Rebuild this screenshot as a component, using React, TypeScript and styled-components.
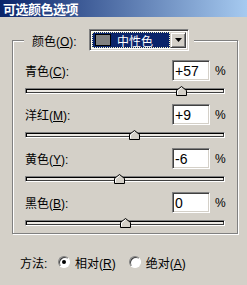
import styled, { createGlobalStyle } from 'styled-components';

const GlobalStyle = createGlobalStyle`
  html, body {
    margin: 0;
    padding: 0;
    background: #d4d0c8;
  }
  body {
    font-family: 'Liberation Sans', 'Noto Sans CJK SC', sans-serif;
    font-size: 12px;
    color: #000;
  }
`;

type TChannel = {
  name: string;
  key: string;
  value: number;
};

const channels: TChannel[] = [
  { name: '青色', key: 'C', value: 57 },
  { name: '洋红', key: 'M', value: 9 },
  { name: '黄色', key: 'Y', value: -6 },
  { name: '黑色', key: 'B', value: 0 },
];

const formatValue = (v: number) => (v > 0 ? `+${v}` : `${v}`);

const Thumb = ({ value }: { value: number }) => (
  <ThumbWrap style={{ left: `${(value + 100) / 2}%` }}>
    <svg width='11' height='10' viewBox='0 0 11 10'>
      <path d='M0.5 9.5 V4.5 L5.5 0.5 L10.5 4.5 V9.5 Z' fill='#d4d0c8' stroke='#000' />
      <path d='M1.5 8.5 V5 L5.5 1.8' fill='none' stroke='#fff' />
    </svg>
  </ThumbWrap>
);

export default function App() {
  return (
    <Dialog>
      <GlobalStyle />
      <TitleBar>可选颜色选项</TitleBar>
      <Group>
        <Legend>
          <LegendLabel>
            颜色(<u>O</u>):
          </LegendLabel>
          <Select>
            <SelectField>
              <Swatch />
              <SelectText>中性色</SelectText>
            </SelectField>
            <ArrowButton>
              <svg width='7' height='4' viewBox='0 0 7 4'>
                <path d='M0 0 H7 L3.5 4 Z' fill='#000' />
              </svg>
            </ArrowButton>
          </Select>
        </Legend>
        {channels.map((c) => (
          <Channel key={c.key}>
            <HeaderRow>
              <Label>
                {c.name}(<u>{c.key}</u>):
              </Label>
              <ValueBox>{formatValue(c.value)}</ValueBox>
              <Percent>%</Percent>
            </HeaderRow>
            <Track>
              <Thumb value={c.value} />
            </Track>
          </Channel>
        ))}
      </Group>
      <MethodRow>
        <MethodLabel>方法:</MethodLabel>
        <RadioItem>
          <Radio checked />
          <RadioText>
            相对(<u>R</u>)
          </RadioText>
        </RadioItem>
        <RadioItem>
          <Radio />
          <RadioText>
            绝对(<u>A</u>)
          </RadioText>
        </RadioItem>
      </MethodRow>
    </Dialog>
  );
}

const Dialog = styled.div`
  width: 247px;
  height: 285px;
  display: flex;
  flex-direction: column;
  background: #d4d0c8;
  overflow: hidden;
`;

const TitleBar = styled.div`
  height: 17px;
  padding-left: 3px;
  display: flex;
  align-items: center;
  background: linear-gradient(to right, #0a246a, #a6caf0);
  color: #fff;
  font-family: 'Noto Sans CJK SC', sans-serif;
  font-weight: bold;
  font-size: 13px;
  letter-spacing: -0.5px;
`;

const Group = styled.fieldset`
  margin: 12px 0 0 12px;
  width: 226px;
  box-sizing: border-box;
  min-inline-size: 0;
  padding: 9px 12px 7px 12px;
  border: 1px solid #808080;
  box-shadow: inset 1px 1px 0 #fff, 1px 1px 0 #fff;
`;

const Legend = styled.legend`
  display: flex;
  align-items: center;
  padding: 0 5px 0 8px;
  margin-left: -1px;
  background: #d4d0c8;
`;

const LegendLabel = styled.span`
  width: 57px;
`;

const Select = styled.div`
  display: flex;
  width: 100px;
  height: 22px;
  box-sizing: border-box;
  border: 1px solid;
  border-color: #808080 #fff #fff #808080;
  box-shadow: inset 1px 1px 0 #404040, inset -1px -1px 0 #d4d0c8;
  background: #fff;
  padding: 2px;
`;

const SelectField = styled.div`
  flex: 1;
  display: flex;
  align-items: center;
  gap: 6px;
  padding-left: 3px;
  background: #0a246a;
  outline: 1px dotted #f4f0c0;
  outline-offset: -1px;
`;

const Swatch = styled.div`
  width: 16px;
  height: 12px;
  background: #808080;
  border: 1px solid #000;
  box-sizing: border-box;
`;

const SelectText = styled.span`
  color: #fff;
  font-family: 'Noto Sans CJK SC', sans-serif;
  font-size: 12px;
`;

const ArrowButton = styled.div`
  width: 16px;
  display: flex;
  align-items: center;
  justify-content: center;
  box-sizing: border-box;
  background: #d4d0c8;
  border: 1px solid;
  border-color: #d4d0c8 #404040 #404040 #d4d0c8;
  box-shadow: inset 1px 1px 0 #fff, inset -1px -1px 0 #808080;
`;

const Channel = styled.div`
  & + & {
    margin-top: 10px;
  }
`;

const HeaderRow = styled.div`
  display: flex;
  align-items: center;
  height: 21px;
`;

const Label = styled.span`
  flex: 1;
`;

const ValueBox = styled.div`
  width: 38px;
  height: 21px;
  box-sizing: border-box;
  border: 1px solid;
  border-color: #808080 #fff #fff #808080;
  box-shadow: inset 1px 1px 0 #404040, inset -1px -1px 0 #d4d0c8;
  background: #fff;
  padding: 1px 0 0 2px;
  font-size: 14px;
  line-height: 18px;
`;

const Percent = styled.span`
  width: 10px;
  margin-left: 5px;
  text-align: right;
`;

const Track = styled.div`
  position: relative;
  margin-top: 7px;
  height: 6px;
  box-sizing: border-box;
  border: 1px solid;
  border-color: #808080 #fff #fff #808080;
  box-shadow: inset 1px 1px 0 #000, inset -1px -1px 0 #404040;
  background: #ece9e4;
`;

const ThumbWrap = styled.div`
  position: absolute;
  top: -3px;
  margin-left: -5px;
  display: flex;
`;

const MethodRow = styled.div`
  display: flex;
  align-items: center;
  margin-top: 21px;
  padding-left: 20px;
  height: 14px;
`;

const MethodLabel = styled.span`
  width: 38px;
`;

const RadioItem = styled.label`
  display: flex;
  align-items: center;
  margin-right: 13px;
`;

const Radio = styled.span<{ checked?: boolean }>`
  position: relative;
  width: 12px;
  height: 12px;
  box-sizing: border-box;
  border-radius: 50%;
  border: 1px solid;
  border-color: #808080 #fff #fff #808080;
  box-shadow: inset 1px 1px 0 #404040;
  background: #fff;
  &::after {
    content: '';
    display: ${({ checked }) => (checked ? 'block' : 'none')};
    position: absolute;
    left: 3px;
    top: 3px;
    width: 4px;
    height: 4px;
    border-radius: 50%;
    background: #000;
  }
`;

const RadioText = styled.span`
  margin-left: 5px;
`;
